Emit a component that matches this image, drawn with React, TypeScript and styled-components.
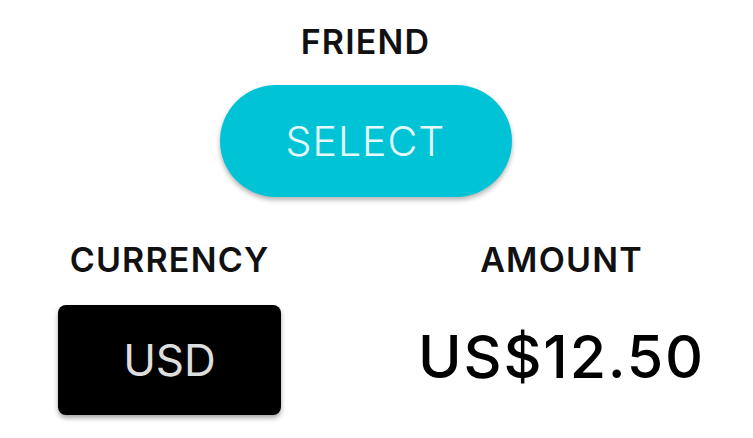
import styled, { createGlobalStyle } from 'styled-components';

const GlobalStyle = createGlobalStyle`
  html, body {
    margin: 0;
    padding: 0;
    background: #ffffff;
  }
  body {
    font-family: Inter, "Noto Sans", sans-serif;
    color: #111111;
  }
`;

export default function App() {
  return (
    <Page>
      <GlobalStyle />
      <Field>
        <Label>FRIEND</Label>
        <SelectButton type="button">SELECT</SelectButton>
      </Field>
      <Row>
        <Field>
          <Label>CURRENCY</Label>
          <CurrencyBox type="button">USD</CurrencyBox>
        </Field>
        <Field>
          <Label>AMOUNT</Label>
          <Amount>US$12.50</Amount>
        </Field>
      </Row>
    </Page>
  );
}

const Page = styled.div`
  width: 753px;
  height: 438px;
  box-sizing: border-box;
  padding: 22px 22px 0 0;
  display: flex;
  flex-direction: column;
  align-items: center;
`;

const Field = styled.div`
  display: flex;
  flex-direction: column;
  align-items: center;
`;

const Label = styled.div`
  font-size: 34px;
  font-weight: 600;
  line-height: 40px;
  letter-spacing: 1.2px;
  color: #111111;
`;

const SelectButton = styled.button`
  margin-top: 23px;
  width: 292px;
  height: 112px;
  border: none;
  border-radius: 56px;
  background: #00c4d6;
  color: #e6f9fb;
  font-family: inherit;
  font-size: 41px;
  font-weight: 300;
  letter-spacing: 1px;
  box-shadow: 0 3px 5px rgba(0, 0, 0, 0.3);
`;

const Row = styled.div`
  margin-top: 43px;
  display: grid;
  grid-template-columns: 300px 300px;
  column-gap: 92px;
`;

const CurrencyBox = styled.button`
  margin-top: 25px;
  width: 223px;
  height: 110px;
  border: none;
  border-radius: 8px;
  background: #000000;
  color: #dddddd;
  font-family: inherit;
  font-size: 44px;
  font-weight: 400;
  box-shadow: 0 3px 5px rgba(0, 0, 0, 0.35);
`;

const Amount = styled.div`
  margin-top: 42px;
  font-size: 59px;
  font-weight: 500;
  line-height: 70px;
  letter-spacing: 1.8px;
  color: #000000;
`;
